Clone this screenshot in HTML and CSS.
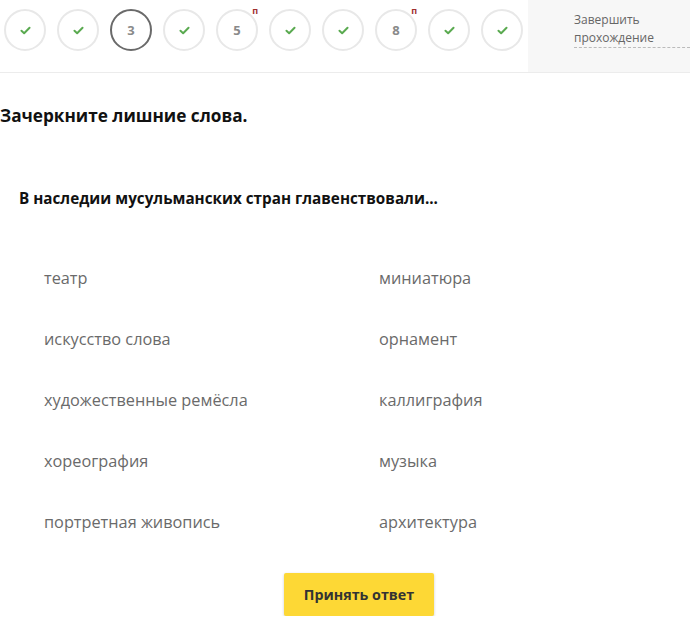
FILE: index.html
```html
<!DOCTYPE html>
<html lang="ru">
<head>
<meta charset="utf-8">
<link rel="stylesheet" href="styles.css">
</head>
<body>
<header class="top">
  <ul class="steps">
    <li class="step"><svg class="chk" viewBox="0 0 12 10"><path d="M1.5 5.2 L4.5 8 L10.5 2" /></svg></li>
    <li class="step"><svg class="chk" viewBox="0 0 12 10"><path d="M1.5 5.2 L4.5 8 L10.5 2" /></svg></li>
    <li class="step current">3</li>
    <li class="step"><svg class="chk" viewBox="0 0 12 10"><path d="M1.5 5.2 L4.5 8 L10.5 2" /></svg></li>
    <li class="step num">5<span class="mark">п</span></li>
    <li class="step"><svg class="chk" viewBox="0 0 12 10"><path d="M1.5 5.2 L4.5 8 L10.5 2" /></svg></li>
    <li class="step"><svg class="chk" viewBox="0 0 12 10"><path d="M1.5 5.2 L4.5 8 L10.5 2" /></svg></li>
    <li class="step num">8<span class="mark">п</span></li>
    <li class="step"><svg class="chk" viewBox="0 0 12 10"><path d="M1.5 5.2 L4.5 8 L10.5 2" /></svg></li>
    <li class="step"><svg class="chk" viewBox="0 0 12 10"><path d="M1.5 5.2 L4.5 8 L10.5 2" /></svg></li>
  </ul>
  <div class="finish"><span class="finish-link">Завершить прохождение</span></div>
</header>
<main class="content">
  <h1 class="title">Зачеркните лишние слова.</h1>
  <p class="question">В наследии мусульманских стран главенствовали...</p>
  <div class="options">
    <span class="opt">театр</span>
    <span class="opt">миниатюра</span>
    <span class="opt">искусство слова</span>
    <span class="opt">орнамент</span>
    <span class="opt">художественные ремёсла</span>
    <span class="opt">каллиграфия</span>
    <span class="opt">хореография</span>
    <span class="opt">музыка</span>
    <span class="opt">портретная живопись</span>
    <span class="opt">архитектура</span>
  </div>
  <button class="submit">Принять ответ</button>
</main>
</body>
</html>
```
FILE: styles.css
```css
html, body {
  margin: 0;
  padding: 0;
  background: #fff;
  font-family: "Open Sans", "Noto Sans", sans-serif;
}
.top {
  display: flex;
  height: 72px;
  border-bottom: 1px solid #ececec;
}
.steps {
  list-style: none;
  margin: 0;
  padding: 9px 0 0 4px;
  width: 524px;
  display: flex;
  gap: 11px;
  align-items: flex-start;
}
.step {
  position: relative;
  box-sizing: border-box;
  width: 42px;
  height: 42px;
  border: 2px solid #e8e8e8;
  border-radius: 50%;
  display: flex;
  align-items: center;
  justify-content: center;
  font-size: 13px;
  font-weight: 700;
  color: #8a8a8a;
}
.step.current {
  border-color: #6a6a6a;
}
.chk {
  width: 11px;
  height: 9px;
}
.chk path {
  fill: none;
  stroke: #5aaa50;
  stroke-width: 2.2;
  stroke-linecap: round;
  stroke-linejoin: round;
}
.mark {
  position: absolute;
  top: -7px;
  right: -2px;
  font-size: 9px;
  font-weight: 700;
  color: #a03030;
}
.finish {
  flex: 1;
  background: #f7f7f7;
  padding: 11px 0 0 46px;
}
.finish-link {
  display: block;
  font-size: 12px;
  line-height: 18px;
  color: #666;
  border-bottom: 1px dashed #bbb;
  box-sizing: border-box;
  width: 116px;
}
.content {
  padding: 0;
}
.title {
  margin: 31px 0 0 0;
  font-size: 17.2px;
  line-height: 24px;
  font-weight: 700;
  color: #111;
}
.question {
  margin: 59px 0 0 19px;
  font-size: 15.25px;
  line-height: 22px;
  font-weight: 700;
  color: #111;
}
.options {
  margin: 38px 0 0 44px;
  display: grid;
  grid-template-columns: 335px 1fr;
  grid-auto-rows: 61px;
  align-items: center;
}
.opt {
  font-size: 16.3px;
  line-height: 22px;
  color: #6a6a6a;
}
.submit {
  display: block;
  margin: 21px 0 0 284px;
  width: 150px;
  height: 43px;
  border: none;
  border-radius: 2px;
  background: #fdd835;
  box-shadow: 0 1px 3px rgba(0,0,0,0.2);
  font-family: "Open Sans", "Noto Sans", sans-serif;
  font-size: 14.3px;
  font-weight: 700;
  color: #333;
}
```
